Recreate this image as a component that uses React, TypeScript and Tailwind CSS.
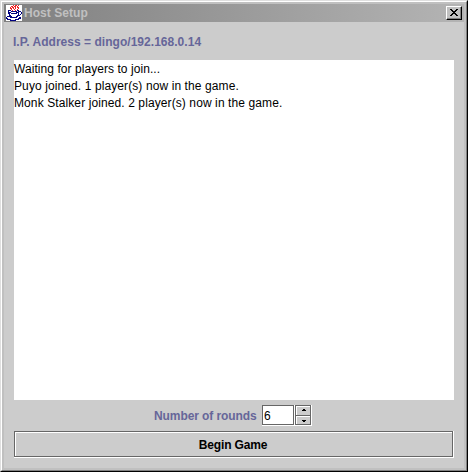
const cup = [
  ".......r.rr.r...",
  ".....rr.rr.r....",
  "....r.rr.r.rr...",
  "....rr.r.r..r...",
  ".....r..r..r....",
  "..bbb.r..r.bb...",
  "..b..bbbbbb.bbb.",
  "..bbb.....bbb..b",
  "..bb.bbbbbb.b..b",
  "...b........b.b.",
  "...bb......bbb..",
  ".bbbbb....bb....",
  "b...bbbbbbb..bb.",
  "bb..........bbb.",
  ".bbbb....bbbb...",
  "....bbbbbb......",
];

function JavaIcon() {
  return (
    <svg width="16" height="16" viewBox="0 0 16 16" shapeRendering="crispEdges" className="block bg-white">
      {cup.flatMap((row, y) =>
        row.split("").map((c, x) =>
          c === "." ? null : (
            <rect key={`${x}-${y}`} x={x} y={y} width="1" height="1" fill={c === "r" ? "#f02020" : "#000080"} />
          ),
        ),
      )}
    </svg>
  );
}

function CloseIcon() {
  return (
    <svg width="8" height="7" viewBox="0 0 8 7" shapeRendering="crispEdges" className="block">
      <path d="M0 0h2v1h-2zM6 0h2v1h-2zM1 1h2v1h-2zM5 1h2v1h-2zM2 2h4v1h-4zM3 3h2v1h-2zM2 4h4v1h-4zM1 5h2v1h-2zM5 5h2v1h-2zM0 6h2v1h-2zM6 6h2v1h-2z" />
    </svg>
  );
}

function SpinButton({ up }: { up?: boolean }) {
  return (
    <button className={up ? "block h-[11px] w-4 border border-[#666666]" : "block h-[9px] w-4 border border-t-0 border-[#666666]"}>
      <span className={up ? "block h-[9px] border-t border-l border-white pt-[2px] pl-[5px]" : "block h-2 border-t border-l border-white pt-[3px] pl-[5px]"}>
        <svg width="4" height="2" viewBox="0 0 4 2" shapeRendering="crispEdges" className="block">
          <path d={up ? "M1 0h2v1h1v1h-4v-1h1z" : "M0 0h4v1h-1v1h-2v-1h-1z"} />
        </svg>
      </span>
    </button>
  );
}

export default function App() {
  return (
    <div className="h-[472px] w-[468px] border-t border-l border-r border-b border-t-[#dfdfdf] border-l-[#dfdfdf] border-r-black border-b-black font-['Liberation_Sans',Arial,sans-serif] text-xs">
      <div className="h-full border border-t-white border-r-[#808080] border-b-[#808080] border-l-white bg-[#c0c0c0] p-[2px]">
        <div className="flex h-full flex-col bg-[#cccccc]">
          <header className="flex h-[18px] shrink-0 items-center bg-linear-to-r from-[#808080] to-[#b4b4b4] pr-[2px] pl-[2px]">
            <JavaIcon />
            <span className="ml-[2px] text-[12px] font-bold tracking-[0.05px] text-[#c0c0c0]">Host Setup</span>
            <button className="ml-auto h-[14px] w-4 border border-t-white border-r-black border-b-black border-l-white bg-[#c0c0c0]">
              <span className="flex h-full items-start border-r border-b border-[#808080] pt-[2px] pl-[3px]">
                <CloseIcon />
              </span>
            </button>
          </header>
          <main className="flex grow flex-col px-[10px]">
            <div className="flex h-[38px] items-center pt-[2px] font-bold text-[#666699]">
              <span className="-ml-px tracking-[0.03px]">I.P. Address = dingo/192.168.0.14</span>
            </div>
            <div className="h-[340px] bg-white pt-[1px] leading-[17px] text-black">
              <p className="tracking-[0.06px]">Waiting for players to join...</p>
              <p className="tracking-[0.1px]">Puyo joined. 1 player(s) now in the game.</p>
              <p className="tracking-[0.1px]">Monk Stalker joined. 2 player(s) now in the game.</p>
            </div>
            <div className="flex h-[31px] items-start pt-[5px] pl-[140px]">
              <label className="w-[108px] pt-px leading-[21px] font-bold tracking-[-0.08px] text-[#666699]">Number of rounds</label>
              <div className="h-[21px] w-[33px] border-r border-b border-white">
                <div className="h-5 w-8 border border-[#666666] bg-white pl-px leading-[20px]">6</div>
              </div>
              <div className="h-[21px] w-[17px] border-r border-b border-white">
                <SpinButton up />
                <SpinButton />
              </div>
            </div>
            <button className="h-[27px] border-r border-b border-white text-black">
              <span className="block h-[26px] border border-[#666666]">
                <span className="block h-6 border-t border-l border-white pt-px pr-[2px] text-center leading-[23px] font-bold tracking-[-0.15px]">Begin Game</span>
              </span>
            </button>
          </main>
        </div>
      </div>
    </div>
  );
}
